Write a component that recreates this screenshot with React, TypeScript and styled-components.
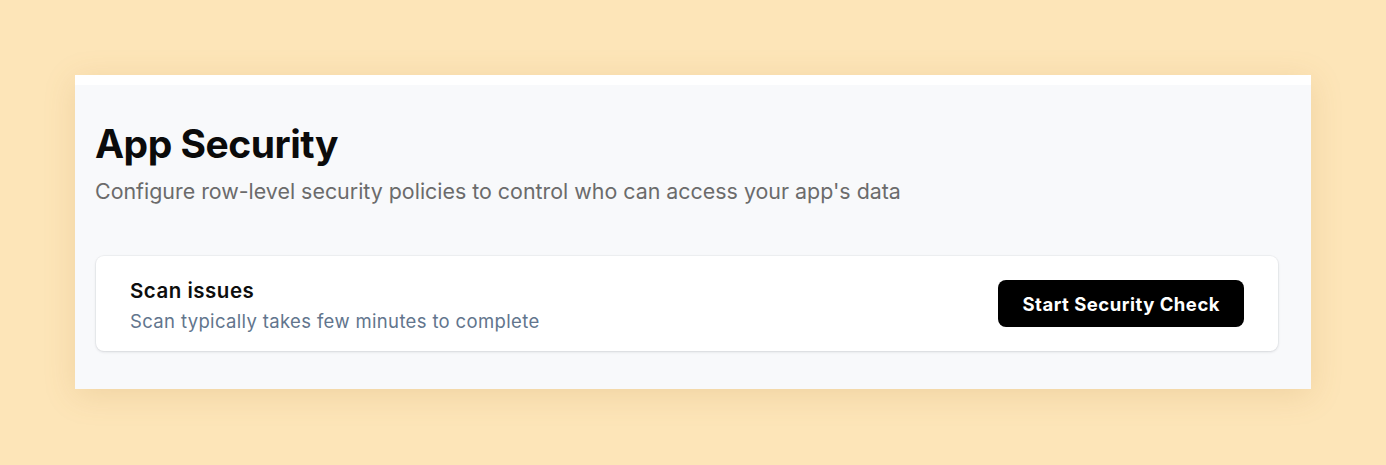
import React from "react";
import styled, { createGlobalStyle } from "styled-components";

const GlobalStyle = createGlobalStyle`
  html, body {
    margin: 0;
    padding: 0;
    background: #fde5b8;
    font-family: Inter, "Noto Sans", sans-serif;
  }
  * { box-sizing: border-box; }
`;

const Page = styled.div`
  width: 1386px;
  height: 465px;
  padding: 75px 75px 0 75px;
`;

const Frame = styled.div`
  width: 1236px;
  height: 314px;
  background: #ffffff;
  padding-top: 10px;
  box-shadow: 0 6px 30px rgba(180, 130, 60, 0.18);
`;

const Panel = styled.section`
  height: 100%;
  background: #f8f9fb;
  padding: 36px 33px 0 20px;
  display: flex;
  flex-direction: column;
`;

const Title = styled.h1`
  margin: 0;
  font-size: 39px;
  line-height: 46px;
  font-weight: 700;
  letter-spacing: -0.5px;
  color: #0b0b0b;
`;

const Subtitle = styled.p`
  margin: 10px 0 0 0;
  font-size: 21.4px;
  line-height: 28px;
  color: #6b6b6b;
`;

const Card = styled.div`
  margin-top: 51px;
  margin-left: 1px;
  height: 95px;
  background: #ffffff;
  border-radius: 8px;
  box-shadow: 0 1px 3px rgba(15, 23, 42, 0.12), 0 0 0 1px rgba(15, 23, 42, 0.03);
  display: flex;
  align-items: center;
  justify-content: space-between;
  padding: 0 34px 0 34px;
`;

const CardText = styled.div`
  display: flex;
  flex-direction: column;
  gap: 5px;
  padding-top: 3px;
`;

const CardTitle = styled.div`
  font-size: 20.5px;
  line-height: 26px;
  font-weight: 600;
  color: #0d0d0d;
  letter-spacing: 0.5px;
`;

const CardHint = styled.div`
  font-size: 18.5px;
  line-height: 24px;
  color: #62758d;
  letter-spacing: 0.35px;
`;

const Button = styled.button`
  height: 47px;
  padding: 0 24px;
  border: none;
  border-radius: 8px;
  background: #000000;
  color: #ffffff;
  font-family: inherit;
  font-size: 18.5px;
  font-weight: 700;
  letter-spacing: 0.5px;
  cursor: pointer;
`;

export default function App() {
  return (
    <>
      <GlobalStyle />
      <Page>
        <Frame>
          <Panel>
            <Title>App Security</Title>
            <Subtitle>
              Configure row-level security policies to control who can access your app's data
            </Subtitle>
            <Card>
              <CardText>
                <CardTitle>Scan issues</CardTitle>
                <CardHint>Scan typically takes few minutes to complete</CardHint>
              </CardText>
              <Button>Start Security Check</Button>
            </Card>
          </Panel>
        </Frame>
      </Page>
    </>
  );
}
